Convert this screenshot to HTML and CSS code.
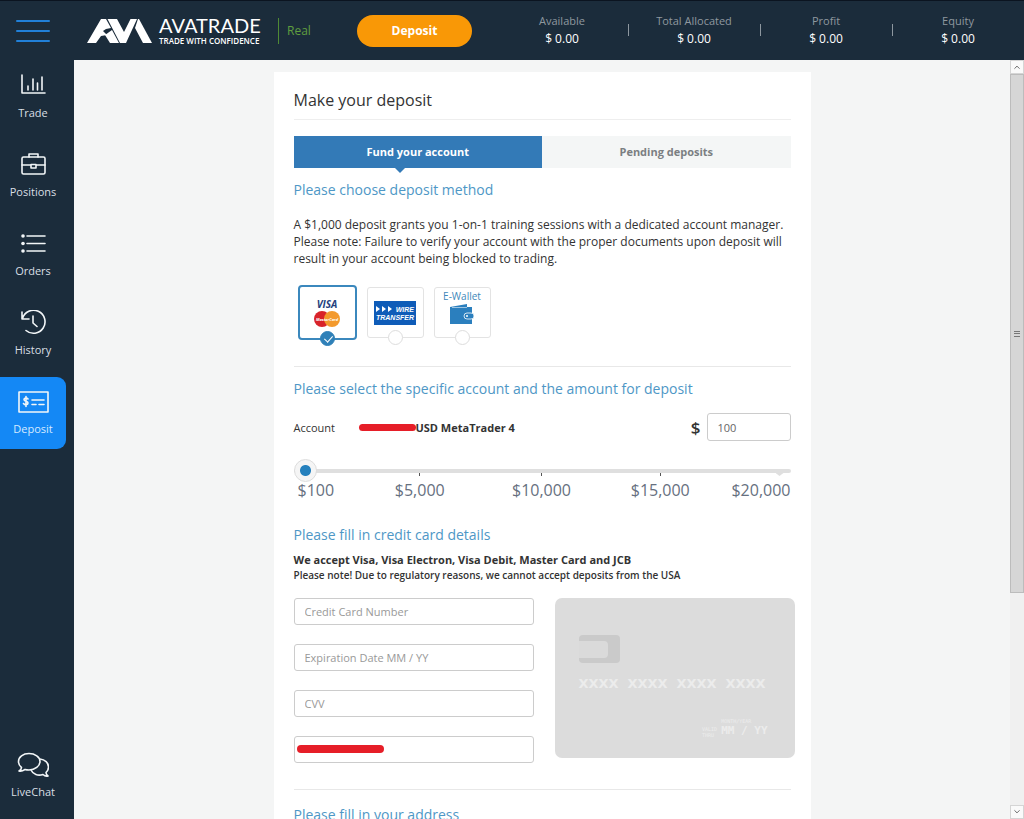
FILE: index.html
```html
<!DOCTYPE html>
<html lang="en">
<head>
  <meta charset="UTF-8">
  <meta name="viewport" content="width=device-width, initial-scale=1.0">
  <title>AvaTrade - Deposit</title>
  <link rel="stylesheet" href="styles.css">
</head>
<body>
  <header class="topbar">
    <button type="button" class="menu-btn" aria-label="Menu">
      <span></span><span></span><span></span>
    </button>
    <a href="#" class="logo">
      <svg width="66" height="26" viewBox="0 0 66 26" fill="#fff" aria-hidden="true">
        <path d="M0 25 14 1h5l5 9-5 1-3 2 4 4-6 1-5 7z"/>
        <path d="M20.500 1H30l7 13 6.500-13H50L39 25h-6z"/>
        <path d="M51 1h1l13 24h-9l-8-15z"/>
        <path d="M25 12l7 13h-9l-5-8z"/>
      </svg>
      <span class="logo-text">
        <span class="logo-name">AVATRADE</span>
        <span class="logo-slogan">TRADE WITH CONFIDENCE</span>
      </span>
    </a>
    <span class="account-type">Real</span>
    <button type="button" class="deposit-btn">Deposit</button>
    <dl class="stats">
      <div class="stat"><dt>Available</dt><dd>$ 0.00</dd></div>
      <div class="stat"><dt>Total Allocated</dt><dd>$ 0.00</dd></div>
      <div class="stat"><dt>Profit</dt><dd>$ 0.00</dd></div>
      <div class="stat"><dt>Equity</dt><dd>$ 0.00</dd></div>
    </dl>
  </header>

  <div class="layout">
    <nav class="sidebar">
      <a href="#" class="nav-item">
        <svg class="nav-icon" viewBox="0 0 32 26"><path d="M5 2v18h23M11 17v-4M16 17V6M20.500 17v-7M25 17V4"/></svg>
        Trade
      </a>
      <a href="#" class="nav-item">
        <svg class="nav-icon" viewBox="0 0 32 26"><rect x="5" y="5" width="23" height="17" rx="1.500"/><path d="M12 5V2h9v3M5 13h9M19 13h9M14 12.500h5v3.500h-5z"/></svg>
        Positions
      </a>
      <a href="#" class="nav-item">
        <svg class="nav-icon" viewBox="0 0 32 26"><path d="M10 5h18M10 12.500h18M10 20h18"/><g class="fill"><circle cx="6" cy="5" r="1.800"/><circle cx="6" cy="12.500" r="1.800"/><circle cx="6" cy="20" r="1.800"/></g></svg>
        Orders
      </a>
      <a href="#" class="nav-item">
        <svg class="nav-icon" viewBox="0 0 32 26"><path d="M5 2v7h7M5.500 8.500A11.500 11.500 0 1 1 9 20.500M16 6v7l4 3.500"/></svg>
        History
      </a>
      <a href="#" class="nav-item active">
        <svg class="nav-icon" viewBox="0 0 32 26"><rect x="2" y="3" width="29" height="20"/><path d="M15 11h12M15 15.500h4M22 15.500h5"/><path d="M11 10c-1-1.500-4-1.500-4 .5s4 1.500 4 3.500-3 2.500-4.500.5M9 7.500v10"/></svg>
        Deposit
      </a>
      <a href="#" class="nav-item chat">
        <svg class="nav-icon" viewBox="0 0 32 26"><path d="M2 19c2-1 2.500-2 2.500-3.500C2.500 14 1.500 12 1.500 9.500 1.500 5 6 1.500 12 1.500s11 3.500 11 8-5 8.500-11 8.500c-1.500 0-3-.2-4-.5C6.500 18.500 4 19.500 2 19z"/><path d="M23 7c5 .5 8.500 4 8.500 8 0 2-1 4-2.500 5.500 0 1.500.5 2.500 2 3.500-2 .5-4-.5-5-1.500-5 1.500-10 0-12-4.500"/></svg>
        LiveChat
      </a>
    </nav>

    <main class="content">
      <section class="panel">
        <h1>Make your deposit</h1>
        <div class="tabs">
          <button type="button" class="tab active">Fund your account</button>
          <button type="button" class="tab">Pending deposits</button>
        </div>

        <form>
          <h2>Please choose deposit method</h2>
          <p class="note">A $1,000 deposit grants you 1-on-1 training sessions with a dedicated account manager. Please note: Failure to verify your account with the proper documents upon deposit will result in your account being blocked to trading.</p>

          <div class="methods">
            <label class="method selected">
              <svg width="30" height="30" viewBox="0 0 30 30" role="img" aria-label="Visa MasterCard">
                <text x="15" y="10" class="visa-text">VISA</text>
                <circle cx="10" cy="21" r="8" fill="#d8232a"/>
                <circle cx="20" cy="21" r="8" fill="#f39a2d"/>
                <text x="15" y="23" class="mc-text">MasterCard</text>
              </svg>
              <input type="radio" name="method" value="card" checked>
            </label>
            <label class="method">
              <svg width="42" height="24" viewBox="0 0 42 24" role="img" aria-label="Wire Transfer">
                <rect width="42" height="24" fill="#0f5cb8"/>
                <path d="M2 5l4 3-4 3zM8 5l4 3-4 3zM14 5l4 3-4 3z" fill="#fff"/>
                <text x="40" y="11" text-anchor="end" class="wire-text">WIRE</text>
                <text x="21" y="19" text-anchor="middle" class="wire-text">TRANSFER</text>
              </svg>
              <input type="radio" name="method" value="wire">
            </label>
            <label class="method wallet">
              <span>E-Wallet</span>
              <svg width="24" height="20" viewBox="0 0 24 20" aria-hidden="true">
                <path d="M0 3 17 0v3h5v17H0z" fill="#2b7fbe"/>
                <path d="M2 3.500h15" stroke="#9cc4e2"/>
                <rect x="14" y="9" width="10" height="6" rx="3" fill="#2b7fbe" stroke="#d3e5f2"/>
                <circle cx="17" cy="12" r="1" fill="#fff"/>
              </svg>
              <input type="radio" name="method" value="wallet">
            </label>
          </div>

          <hr>
          <h2>Please select the specific account and the amount for deposit</h2>
          <div class="account-row">
            <span class="account-label">Account</span>
            <span class="redacted account-number"></span>
            <strong>USD MetaTrader 4</strong>
            <label for="amount" class="currency">$</label>
            <input type="text" id="amount" class="field amount" value="100">
          </div>
          <input type="range" class="slider" min="100" max="20000" value="100" aria-label="Deposit amount">
          <ul class="scale">
            <li>$100</li>
            <li>$5,000</li>
            <li class="wide">$10,000</li>
            <li class="wide">$15,000</li>
            <li>$20,000</li>
          </ul>

          <h2 class="card-heading">Please fill in credit card details</h2>
          <p class="accept">We accept Visa, Visa Electron, Visa Debit, Master Card and JCB</p>
          <p class="regulatory">Please note! Due to regulatory reasons, we cannot accept deposits from the USA</p>

          <div class="card-details">
            <div class="card-fields">
              <input type="text" class="field" placeholder="Credit Card Number" aria-label="Credit Card Number">
              <input type="text" class="field" placeholder="Expiration Date MM / YY" aria-label="Expiration Date">
              <input type="text" class="field" placeholder="CVV" aria-label="CVV">
              <div class="holder">
                <input type="text" class="field" aria-label="Card holder name">
                <span class="redacted holder-name"></span>
              </div>
            </div>
            <div class="card-preview">
              <span class="chip"></span>
              <div class="card-number"><span>XXXX</span><span>XXXX</span><span>XXXX</span><span>XXXX</span></div>
              <div class="card-expiry">
                <span class="valid">VALID<br>THRU</span>
                <span class="expiry-date"><small>MONTH/YEAR</small>MM / YY</span>
              </div>
            </div>
          </div>

          <hr>
          <h2 class="address-heading">Please fill in your address</h2>
        </form>
      </section>
    </main>

    <div class="scrollbar" aria-hidden="true">
      <svg width="14" height="14" viewBox="0 0 14 14"><path d="M4 9l3-3 3 3"/></svg>
      <div class="scroll-track"><div class="scroll-thumb"><i></i></div></div>
      <svg width="14" height="14" viewBox="0 0 14 14"><path d="M4 5l3 3 3-3"/></svg>
    </div>
  </div>
</body>
</html>
```

FILE: styles.css
```css
/* General Styles */
* {
  box-sizing: border-box;
}

body {
  margin: 0;
  height: 100vh;
  display: flex;
  flex-direction: column;
  overflow: hidden;
  font-family: "Open Sans", "Noto Sans", sans-serif;
  font-size: 12px;
  color: #333;
  background: #f4f5f5;
}

button,
input {
  font-family: inherit;
  font-size: inherit;
}

a {
  text-decoration: none;
}

/* Top Bar */
.topbar {
  display: flex;
  align-items: center;
  flex: 0 0 60px;
  background: #1b2c3b;
  border-top: 1px solid #0b1420;
}

.menu-btn {
  display: flex;
  flex-direction: column;
  gap: 8px;
  width: 66px;
  padding: 0 16px;
  border: none;
  background: none;
}

.menu-btn span {
  height: 2px;
  border-radius: 1px;
  background: #2180d8;
}

.logo {
  display: flex;
  align-items: center;
  gap: 6px;
  margin-left: 21px;
  color: #fff;
}

.logo-text {
  display: flex;
  flex-direction: column;
  width: 102px;
  white-space: nowrap;
}

.logo-name {
  font-family: Lato, sans-serif;
  font-size: 20px;
  line-height: 20px;
}

.logo-slogan {
  font-size: 8px;
  font-weight: 600;
  line-height: 11px;
}

.account-type {
  margin-left: 17px;
  padding-left: 8px;
  border-left: 1px solid #4f8a35;
  line-height: 26px;
  color: #5f9e3f;
}

.deposit-btn {
  width: 115px;
  height: 32px;
  margin-left: auto;
  border: none;
  border-radius: 16px;
  background: #f99806;
  color: #fff;
  font-weight: bold;
}

.stats {
  display: flex;
  width: 528px;
  margin: 0 0 0 24px;
  padding-bottom: 2px;
}

.stat {
  position: relative;
  flex: 1;
  text-align: center;
  line-height: 18px;
}

.stat + .stat::before {
  content: "";
  position: absolute;
  left: 0;
  top: 12px;
  width: 1px;
  height: 12px;
  background: #8d979f;
}

.stat dt {
  color: #8f989f;
  font-size: 11px;
}

.stat dd {
  margin: 0;
  color: #fff;
}

/* Sidebar */
.layout {
  display: flex;
  flex: 1;
  min-height: 0;
}

.sidebar {
  display: flex;
  flex-direction: column;
  gap: 7px;
  flex: 0 0 74px;
  padding: 1px 8px 7px 0;
  background: #1b2c3b;
}

.nav-item {
  display: flex;
  flex-direction: column;
  align-items: center;
  gap: 6px;
  height: 72px;
  padding-top: 12px;
  border-radius: 0 9px 9px 0;
  color: #d9dfe4;
  font-size: 11px;
  line-height: 16px;
}

.nav-item.active {
  background: #1488f5;
  color: #d5eaff;
}

.nav-item.chat {
  margin-top: auto;
}

.nav-icon {
  width: 32px;
  height: 26px;
  fill: none;
  stroke: #f2f6f8;
  stroke-width: 1.6;
  stroke-linecap: round;
  stroke-linejoin: round;
}

.nav-icon .fill {
  fill: #f2f6f8;
  stroke: none;
}

/* Panel */
.content {
  flex: 1;
  padding: 12px 20px 0;
  overflow: hidden;
}

.panel {
  max-width: 537px;
  margin: 0 auto;
  padding: 16px 20px;
  background: #fff;
}

h1 {
  margin: 0 0 16px;
  padding-bottom: 7px;
  border-bottom: 1px solid #eee;
  font-size: 16px;
  font-weight: normal;
  line-height: 24px;
}

h2 {
  margin: 11px 0 0;
  font-size: 14px;
  font-weight: normal;
  line-height: 22px;
  color: #4e97c6;
}

hr {
  margin: 26px 0 0;
  border: none;
  border-top: 1px solid #e8e8e8;
}

.tabs {
  display: flex;
}

.tab {
  position: relative;
  flex: 1;
  height: 32px;
  padding-bottom: 3px;
  border: none;
  background: #f4f6f6;
  color: #7b7f82;
  font-size: 11px;
  font-weight: bold;
}

.tab.active {
  background: #337ab7;
  color: #fff;
}

.tab.active::after {
  content: "";
  position: absolute;
  top: 100%;
  left: 41%;
  border: 5px solid transparent;
  border-top-color: #337ab7;
  border-bottom: none;
}

.note {
  margin: 15px 0 18px;
  line-height: 17px;
}

/* Deposit Methods */
.methods {
  display: flex;
  align-items: center;
  gap: 10px;
  padding-left: 4px;
}

.method {
  position: relative;
  display: flex;
  flex-direction: column;
  align-items: center;
  justify-content: center;
  width: 57px;
  height: 51px;
  border: 1px solid #e3e3e3;
  border-radius: 3px;
}

.method.selected {
  width: 59px;
  height: 55px;
  border: 2px solid #3b88bd;
  border-radius: 4px;
}

.method.wallet {
  justify-content: flex-start;
  font-size: 10px;
  line-height: 16px;
  color: #3f88ba;
}

.method input {
  position: absolute;
  bottom: -8px;
  width: 15px;
  height: 15px;
  margin: 0;
  appearance: none;
  border: 1px solid #ddd;
  border-radius: 50%;
  background: #fff;
}

.method input:checked {
  border-color: #2f80b8;
  background: #2f80b8;
}

.method input:checked::after {
  content: "";
  position: absolute;
  left: 5px;
  top: 2px;
  width: 4px;
  height: 7px;
  border: solid #fff;
  border-width: 0 1px 1px 0;
  transform: rotate(42deg);
}

.visa-text {
  font-size: 10px;
  font-weight: bold;
  font-style: italic;
  text-anchor: middle;
  fill: #243f7e;
}

.mc-text {
  font-size: 4px;
  font-weight: bold;
  font-style: italic;
  text-anchor: middle;
  fill: #fff;
}

.wire-text {
  font-family: "Liberation Sans", sans-serif;
  font-size: 7px;
  font-weight: bold;
  font-style: italic;
  fill: #fff;
}

/* Account and Amount */
.account-row {
  display: flex;
  align-items: center;
  margin-top: 13px;
}

.account-label {
  width: 65px;
  font-size: 11px;
}

.account-row strong {
  font-size: 11px;
}

.redacted {
  height: 7px;
  border-radius: 4px;
  background: #e61e28;
}

.account-number {
  width: 57px;
}

.currency {
  margin-left: auto;
  margin-right: 6px;
  font-size: 17px;
  font-weight: 600;
}

.field {
  width: 100%;
  height: 27px;
  padding: 0 10px;
  border: 1px solid #ccc;
  border-radius: 3px;
  background: #fff;
  font-size: 11px;
  color: #666;
}

.field::placeholder {
  color: #999;
}

.field.amount {
  width: 84px;
  height: 28px;
}

.slider {
  display: block;
  width: 100%;
  height: 23px;
  margin: 18px 0 0;
  appearance: none;
  background: none;
}

.slider::-webkit-slider-runnable-track {
  height: 4px;
  border-radius: 2px;
  background: #dfdfdf;
}

.slider::-webkit-slider-thumb {
  appearance: none;
  width: 23px;
  height: 23px;
  margin-top: -10px;
  border: 1px solid #ddd;
  border-radius: 50%;
  background: radial-gradient(circle, #2580bd 5px, #f5f5f5 6px);
}

.scale {
  display: grid;
  grid-template-columns: 67fr 119fr 119fr 119fr 74fr;
  margin: -9px 0 0;
  padding: 0;
  list-style: none;
  text-align: center;
  font-size: 16px;
  line-height: 24px;
  color: #667080;
}

.scale li::before {
  content: "";
  display: block;
  width: 1px;
  height: 3px;
  margin: 0 auto 2px;
  background: #555;
}

.scale .wide {
  padding-left: 6px;
}

.scale li:first-child {
  padding-left: 4px;
  text-align: left;
}

.scale li:first-child::before {
  background: none;
}

.scale li:last-child {
  text-align: right;
}

.scale li:last-child::before {
  width: 8px;
  height: 3px;
  margin-right: 7px;
  background: #dfdfdf;
  clip-path: polygon(0 0, 100% 0, 50% 100%);
}

/* Credit Card */
.card-heading {
  margin-top: 22px;
}

.accept {
  margin: 6px 0 0;
  font-size: 11px;
  font-weight: bold;
  line-height: 16px;
}

.regulatory {
  margin: 0 0 16px;
  font-size: 10px;
  font-weight: 600;
  line-height: 14px;
}

.card-details {
  display: grid;
  grid-template-columns: 1fr 1fr;
  gap: 21px;
  margin-right: -4px;
}

.card-fields {
  display: flex;
  flex-direction: column;
  gap: 19px;
}

.holder {
  position: relative;
}

.holder-name {
  position: absolute;
  left: 3px;
  top: 9px;
  width: 87px;
  height: 8px;
}

.card-preview {
  display: flex;
  flex-direction: column;
  height: 160px;
  padding: 37px 24px 20px;
  border-radius: 7px;
  background: #dcdcdc;
  color: #ececec;
  font-family: "DejaVu Sans Mono", monospace;
}

.chip {
  display: flex;
  align-items: center;
  width: 41px;
  height: 28px;
  border-radius: 4px;
  background: #cacaca;
}

.chip::before {
  content: "";
  width: 29px;
  height: 17px;
  border-radius: 0 4px 4px 0;
  background: #dadada;
}

.card-number {
  display: flex;
  justify-content: space-between;
  margin-top: 12px;
  padding-right: 5px;
  font-family: "DejaVu Sans", sans-serif;
  font-size: 13px;
  font-weight: bold;
  line-height: 18px;
}

.card-expiry {
  display: flex;
  justify-content: flex-end;
  align-items: flex-end;
  gap: 4px;
  margin-top: auto;
  padding-right: 3px;
}

.valid {
  font-size: 5px;
  line-height: 6px;
}

.expiry-date {
  font-size: 11px;
  font-weight: bold;
  line-height: 14px;
}

.expiry-date small {
  display: block;
  font-size: 5px;
  font-weight: normal;
  line-height: 5px;
}

.address-heading {
  margin-top: 14px;
}

/* Scrollbar */
.scrollbar {
  display: flex;
  flex-direction: column;
  flex: 0 0 14px;
  background: #f0f0f0;
}

.scrollbar svg {
  flex: none;
  border: 1px solid #d5d5d5;
  background: #fafafa;
  fill: none;
  stroke: #555;
}

.scroll-track {
  flex: 1;
}

.scroll-thumb {
  display: flex;
  align-items: center;
  justify-content: center;
  height: 71%;
  border: 1px solid #bcbcbc;
  background: #d6d6d6;
}

.scroll-thumb i {
  width: 6px;
  height: 6px;
  border: solid #777;
  border-width: 1px 0;
  background: linear-gradient(#777, #777) center / 6px 1px no-repeat;
}
```
